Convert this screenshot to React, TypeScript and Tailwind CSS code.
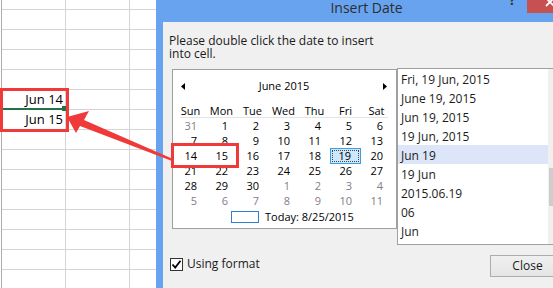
import React from "react";

const sans = "font-['Open_Sans',sans-serif]";

const WEEKS = [
  ["31", "1", "2", "3", "4", "5", "6"],
  ["7", "8", "9", "10", "11", "12", "13"],
  ["14", "15", "16", "17", "18", "19", "20"],
  ["21", "22", "23", "24", "25", "26", "27"],
  ["28", "29", "30", "1", "2", "3", "4"],
  ["5", "6", "7", "8", "9", "10", "11"],
];
const DAYS = ["Sun", "Mon", "Tue", "Wed", "Thu", "Fri", "Sat"];
const FORMATS = [
  "Fri, 19 Jun, 2015",
  "June 19, 2015",
  "Jun 19, 2015",
  "19 Jun, 2015",
  "Jun 19",
  "19 Jun",
  "2015.06.19",
  "06",
  "Jun",
];

const isGray = (w: number, d: number) =>
  (w === 0 && d === 0) || (w === 4 && d >= 3) || w === 5;

const SheetRow = ({ first, text }: { first?: boolean; text?: string }) => (
  <div className={`flex ${first ? "h-[10px]" : "h-[20px]"}`}>
    <div className="w-[64px] border-r border-b border-[#d4d4d4] flex items-center justify-end pr-[2px] text-[13px] text-black">
      {text}
    </div>
    <div className="w-[64px] border-r border-b border-[#d4d4d4]" />
    <div className="w-[40px] border-b border-[#d4d4d4]" />
  </div>
);

const Calendar = () => (
  <div className="mt-[1px] w-[225px] h-[160px] shrink-0 bg-white border border-[#a0a0a0] text-[11px] text-black">
    {/* month nav */}
    <div className="mt-[8px] h-[16px] flex items-center justify-between pl-[8px] pr-[9px]">
      <svg width="4" height="7" viewBox="0 0 4 7">
        <path d="M4 0 L0 3.5 L4 7 Z" fill="#000" />
      </svg>
      <span className="leading-[18px]">June 2015</span>
      <svg width="4" height="7" viewBox="0 0 4 7">
        <path d="M0 0 L4 3.5 L0 7 Z" fill="#000" />
      </svg>
    </div>

    {/* weekday headers */}
    <div className="mt-[9px] ml-[2px] grid grid-cols-[repeat(7,31px)] h-[14px] leading-[15px]">
      {DAYS.map((d) => (
        <span key={d} className="text-center">
          {d}
        </span>
      ))}
    </div>
    <div className="ml-[7px] w-[208px] h-px bg-[#e4e4e4]" />

    {/* day grid */}
    {WEEKS.map((week, w) => (
      <div key={w} className="ml-[2px] grid grid-cols-[repeat(7,31px)] h-[15px] leading-[16px]">
        {week.map((day, d) => {
          const selected = w === 2 && d === 5;
          return (
            <div
              key={d}
              className={`relative text-right pr-[9px] ${isGray(w, d) ? "text-[#857c88]" : ""} ${
                selected ? "bg-[#cce8ff] border border-[#3c9ee0] leading-[14px] pr-[8px]" : ""
              }`}
            >
              {selected && <div className="absolute inset-[1px] border border-dotted border-[#444]" />}
              <span className="relative">{day}</span>
            </div>
          );
        })}
      </div>
    ))}

    {/* today */}
    <div className="mt-[3px] h-[12px] flex items-center">
      <div className="ml-[58px] w-[28px] h-[12px] border border-[#2f7fd0]" />
      <span className="ml-[6px] leading-[12px]">Today: 8/25/2015</span>
    </div>
  </div>
);

const FormatList = () => (
  <div className="w-[169px] h-[177px] shrink-0 bg-white border border-[#a0a0a0] flex text-[12px] text-[#1b1b1b]">
    <div className="w-[150px]">
      {FORMATS.map((f, i) => (
        <div key={f} className={`h-[19px] leading-[21px] pl-[3px] ${i === 4 ? "bg-[#dce6f8]" : ""}`}>
          {f}
        </div>
      ))}
    </div>
    <div className="w-[17px] bg-[#f0f0f0] flex flex-col items-center">
      <svg className="mt-[8px]" width="7" height="4" viewBox="0 0 7 4">
        <path d="M0 4 L3.5 0 L7 4 Z" fill="#606060" />
      </svg>
      <div className="mt-[87px] w-[15px] h-[38px] bg-[#cdcdcd]" />
      <svg className="mt-[27px]" width="7" height="4" viewBox="0 0 7 4">
        <path d="M0 0 L3.5 4 L7 0 Z" fill="#606060" />
      </svg>
    </div>
  </div>
);

const Dialog = () => (
  <div className={`absolute left-[156px] top-0 w-[421px] h-[300px] bg-[#67a3ef] flex flex-col ${sans}`}>
    {/* title bar */}
    <div className="relative h-[22px] shrink-0">
      <div className="text-center text-[14px] leading-[15px] text-[#2e2e2e]">Insert Date</div>
      <span className="absolute left-[353px] top-[-7px] text-[14px] font-bold leading-[14px] text-[#333]">?</span>
      <div className="absolute left-[371px] top-0 w-[45px] h-[13px] bg-[#c75050] flex justify-center">
        <svg className="mt-[-3px]" width="10" height="10" viewBox="0 0 10 10">
          <path d="M1 1 L9 9 M9 1 L1 9" stroke="#fff" strokeWidth="1.8" />
        </svg>
      </div>
    </div>

    {/* client area */}
    <div className="mx-[7px] flex-1 bg-[#f0f0f0] text-[#1a1a1a]">
      <p className="ml-[6px] pt-[12px] text-[12px] leading-[13px]">
        Please double click the date to insert
        <br />
        into cell.
      </p>
      <div className="mt-[8px] ml-[9px] flex items-start">
        <Calendar />
        <FormatList />
      </div>
      <div className="mt-[10px] flex items-start">
        <div className="ml-[7px] w-[320px] mt-[2px] flex items-center">
          <div className="w-[13px] h-[13px] bg-white border border-[#333] flex items-center justify-center">
            <svg width="11" height="11" viewBox="0 0 11 11">
              <path d="M1.5 5.5 L4.2 8.5 L9.5 1.8" stroke="#000" strokeWidth="1.8" fill="none" />
            </svg>
          </div>
          <span className="ml-[4px] text-[12px] leading-[14px]">Using format</span>
        </div>
        <button className="w-[75px] h-[22px] border border-[#acacac] bg-gradient-to-b from-[#f0f0f0] to-[#e5e5e5] text-[12px] text-[#1a1a1a]">
          Close
        </button>
      </div>
    </div>
  </div>
);

export default function App() {
  const rows = Array.from({ length: 14 }, (_, i) => i);
  return (
    <div className={`relative w-[553px] h-[288px] overflow-hidden bg-white ${sans}`}>
      {/* spreadsheet */}
      <div className="ml-[1px] border-l border-[#ababab]">
        <SheetRow first />
        {rows.map((i) => (
          <SheetRow key={i} text={i === 4 ? "Jun 14" : i === 5 ? "Jun 15" : undefined} />
        ))}
      </div>

      {/* active cell edge + fill handle */}
      <div className="absolute left-0 top-[108px] w-[64px] h-[2px] bg-[#217346]" />
      <div className="absolute left-[62px] top-[106px] w-[4px] h-[5px] bg-[#217346]" />

      <Dialog />

      {/* annotations */}
      <div className="absolute left-0 top-[88px] w-[69px] h-[44px] border-[3px] border-[#f03a3a]" />
      <div className="absolute left-[171px] top-[143px] w-[68px] h-[25px] border-[3px] border-[#f03a3a]" />
      <svg className="absolute left-0 top-0 pointer-events-none" width="553" height="288" viewBox="0 0 553 288">
        <polygon points="67,117 89,111 84,120 173,159 172,161 80,126 76,133" fill="#f03a3a" />
      </svg>
    </div>
  );
}
